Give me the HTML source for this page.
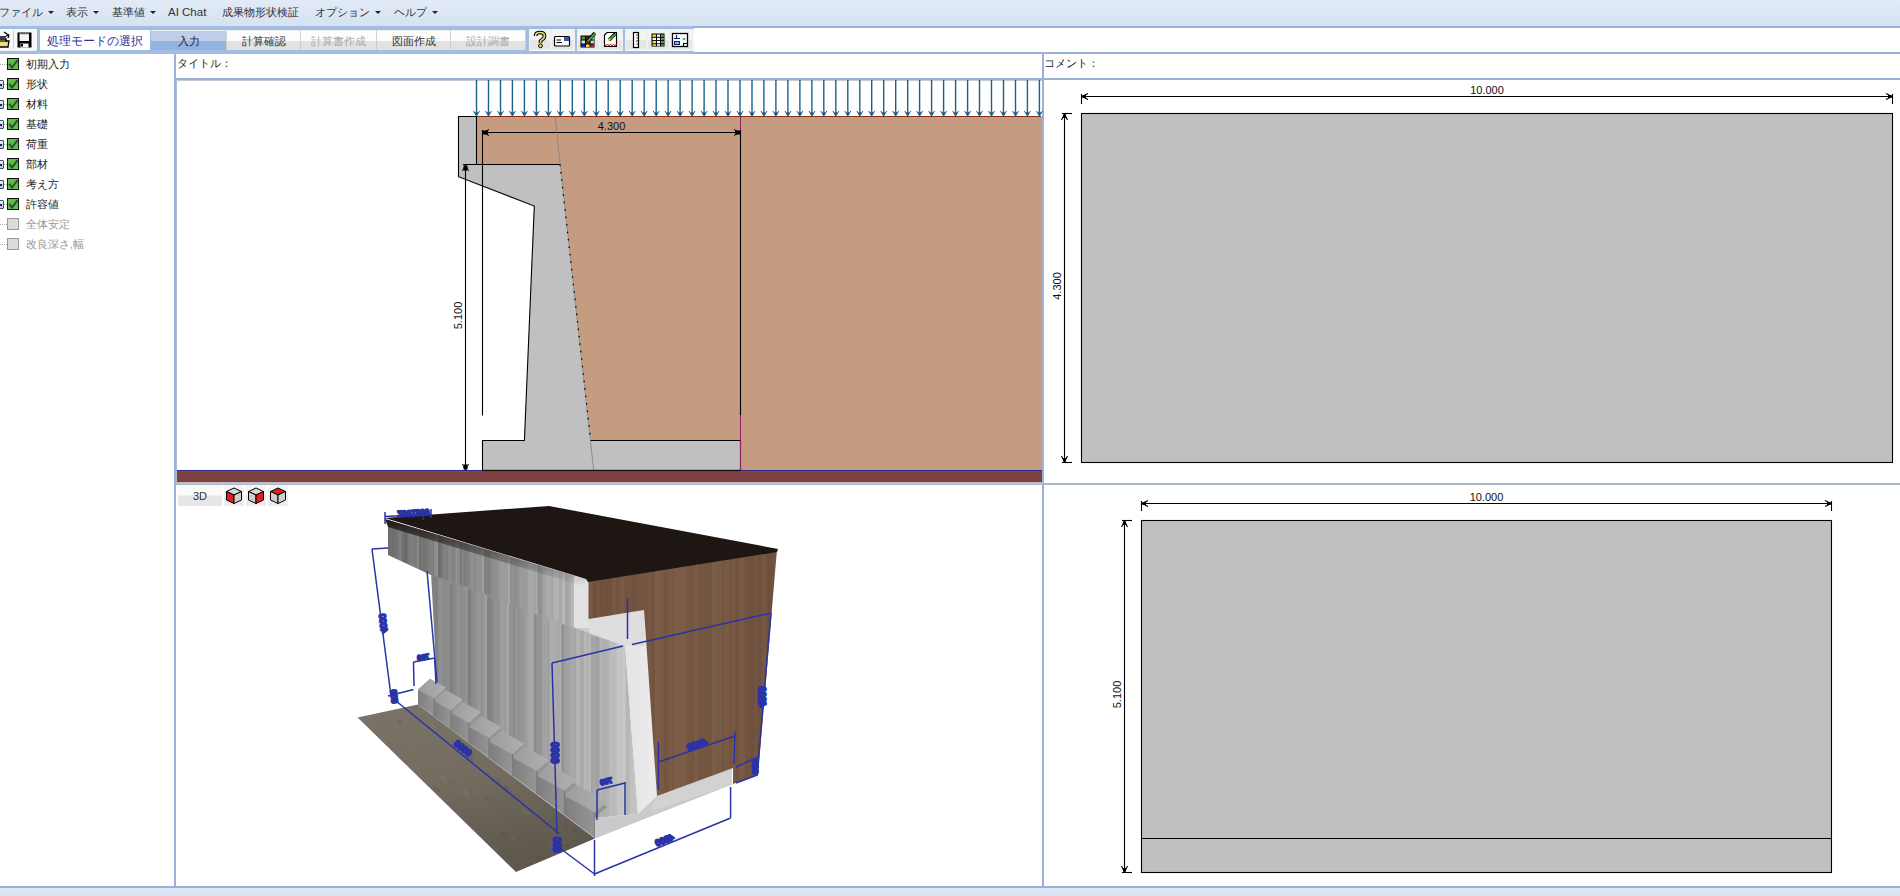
<!DOCTYPE html>
<html><head><meta charset="utf-8">
<style>
*{margin:0;padding:0;box-sizing:border-box}
html,body{width:1900px;height:896px;overflow:hidden;background:#fff;font-family:"Liberation Sans",sans-serif;font-size:12px;color:#222}
.a{position:absolute}
#menubar{left:0;top:0;width:1900px;height:26px;background:linear-gradient(#e2eaf6,#d6e2f2)}
.mi{position:absolute;top:5px;font-size:11px;color:#333;white-space:nowrap;line-height:14px}
.dd{display:inline-block;width:0;height:0;border-left:3px solid transparent;border-right:3px solid transparent;border-top:3px solid #222;vertical-align:middle;margin-left:5px;position:relative;top:-1px}
#tb{left:0;top:26px;width:694px;height:28px;background:#a3bce2}
#tbw{left:694px;top:26px;width:1206px;height:28px;background:#fff;border-top:2px solid #9bb1d7;border-bottom:2px solid #9bb1d7}
.tab{position:absolute;top:4px;height:20px;font-size:11px;text-align:center;line-height:21px;background:linear-gradient(#fdfdfd 0,#fdfdfd 55%,#e2e2e2 55%,#e2e2e2 100%);color:#333}
.tab.dis{color:#a8a8a8}
.tab{border-right:1px solid #cfcfcf;border-top:1px solid #f0f0f0}
.ib{position:absolute;top:4px;width:22px;height:20px;background:linear-gradient(#f6f6f6 0,#f6f6f6 50%,#e6e6e6 50%,#e6e6e6 100%)}
.ibg{position:absolute;top:3px;height:22px;background:#f4f6f8}
.tree{position:absolute;left:0;width:174px;height:20px}
.cb{position:absolute;left:7px;top:0;width:12px;height:12px;border:1px solid #111;background:#5cbf4c}
.cb.off{background:#dcdcdc;border-color:#999}
.exp{position:absolute;left:-5px;top:2px;width:9px;height:9px;border:1px solid #3a4a6a;border-radius:1px;background:linear-gradient(#e8f0fa,#b8c8e4)}
.exp:after{content:"";position:absolute;left:1px;top:3px;width:5px;height:1.5px;background:#223}
.dot{position:absolute;top:6px;height:1px;border-top:1px dotted #aaa}
.tl{position:absolute;left:26px;top:-1px;font-size:11px;line-height:14px;color:#222;white-space:nowrap}
.tl.off{color:#999}
</style></head><body>
<div id="menubar" class="a">
  <span class="mi" style="left:-1px">ファイル<i class="dd"></i></span>
  <span class="mi" style="left:66px">表示<i class="dd"></i></span>
  <span class="mi" style="left:112px">基準値<i class="dd"></i></span>
  <span class="mi" style="left:168px;font-size:11.5px">AI Chat</span>
  <span class="mi" style="left:222px">成果物形状検証</span>
  <span class="mi" style="left:315px">オプション<i class="dd"></i></span>
  <span class="mi" style="left:394px">ヘルプ<i class="dd"></i></span>
</div>
<div id="tb" class="a">
  <div class="ib" style="left:-11px;top:3px;width:24px;height:22px;background:#eef0f4"></div>
  <div class="ib" style="left:13px;top:3px;width:23px;height:22px;background:#eef0f4"></div>
  <div class="a" style="left:40px;top:4px;width:110px;height:20px;background:#fff;color:#33339c;font-size:12px;line-height:23px;padding-left:7px">処理モードの選択</div>
  <div class="tab" style="left:151px;width:76px;background:linear-gradient(#bfcde6 0,#bfcde6 55%,#93b4e0 55%,#93b4e0 100%);color:#223">入力</div>
  <div class="tab" style="left:227px;width:74px">計算確認</div>
  <div class="tab dis" style="left:301px;width:76px">計算書作成</div>
  <div class="tab" style="left:377px;width:74px">図面作成</div>
  <div class="tab dis" style="left:451px;width:75px">設計調書</div>
  <div class="ibg" style="left:529px;width:46px"></div>
  <div class="ibg" style="left:577px;width:46px"></div>
  <div class="ibg" style="left:625px;width:69px"></div>
</div>
<div id="tbw" class="a"></div>

<div class="tree" style="top:58px"><div class="dot" style="left:0px;width:7px"></div><div class="cb"><svg width="10" height="10" style="position:absolute;left:0;top:0"><path d="M1.3 4.8 L4 8.6 L9.6 1.2" stroke="#2a3a2a" stroke-width="2" fill="none" opacity="0.85"/></svg></div><div class="tl">初期入力</div></div>
<div class="tree" style="top:78px"><div class="exp"></div><div class="dot" style="left:4px;width:3px"></div><div class="cb"><svg width="10" height="10" style="position:absolute;left:0;top:0"><path d="M1.3 4.8 L4 8.6 L9.6 1.2" stroke="#2a3a2a" stroke-width="2" fill="none" opacity="0.85"/></svg></div><div class="tl">形状</div></div>
<div class="tree" style="top:98px"><div class="exp"></div><div class="dot" style="left:4px;width:3px"></div><div class="cb"><svg width="10" height="10" style="position:absolute;left:0;top:0"><path d="M1.3 4.8 L4 8.6 L9.6 1.2" stroke="#2a3a2a" stroke-width="2" fill="none" opacity="0.85"/></svg></div><div class="tl">材料</div></div>
<div class="tree" style="top:118px"><div class="exp"></div><div class="dot" style="left:4px;width:3px"></div><div class="cb"><svg width="10" height="10" style="position:absolute;left:0;top:0"><path d="M1.3 4.8 L4 8.6 L9.6 1.2" stroke="#2a3a2a" stroke-width="2" fill="none" opacity="0.85"/></svg></div><div class="tl">基礎</div></div>
<div class="tree" style="top:138px"><div class="exp"></div><div class="dot" style="left:4px;width:3px"></div><div class="cb"><svg width="10" height="10" style="position:absolute;left:0;top:0"><path d="M1.3 4.8 L4 8.6 L9.6 1.2" stroke="#2a3a2a" stroke-width="2" fill="none" opacity="0.85"/></svg></div><div class="tl">荷重</div></div>
<div class="tree" style="top:158px"><div class="exp"></div><div class="dot" style="left:4px;width:3px"></div><div class="cb"><svg width="10" height="10" style="position:absolute;left:0;top:0"><path d="M1.3 4.8 L4 8.6 L9.6 1.2" stroke="#2a3a2a" stroke-width="2" fill="none" opacity="0.85"/></svg></div><div class="tl">部材</div></div>
<div class="tree" style="top:178px"><div class="exp"></div><div class="dot" style="left:4px;width:3px"></div><div class="cb"><svg width="10" height="10" style="position:absolute;left:0;top:0"><path d="M1.3 4.8 L4 8.6 L9.6 1.2" stroke="#2a3a2a" stroke-width="2" fill="none" opacity="0.85"/></svg></div><div class="tl">考え方</div></div>
<div class="tree" style="top:198px"><div class="exp"></div><div class="dot" style="left:4px;width:3px"></div><div class="cb"><svg width="10" height="10" style="position:absolute;left:0;top:0"><path d="M1.3 4.8 L4 8.6 L9.6 1.2" stroke="#2a3a2a" stroke-width="2" fill="none" opacity="0.85"/></svg></div><div class="tl">許容値</div></div>
<div class="tree" style="top:218px"><div class="dot" style="left:0px;width:7px"></div><div class="cb off"></div><div class="tl off">全体安定</div></div>
<div class="tree" style="top:238px"><div class="dot" style="left:0px;width:7px"></div><div class="cb off"></div><div class="tl off">改良深さ,幅</div></div>
<!-- separators -->
<div class="a" style="left:174px;top:54px;width:2px;height:833px;background:#9bb1d7"></div>
<div class="a" style="left:176px;top:78px;width:1724px;height:2px;background:#9bb1d7"></div>
<div class="a" style="left:176px;top:80px;width:1px;height:403px;background:#b0bccf"></div>
<div class="a" style="left:176px;top:80px;width:866px;height:1px;background:#c4cad6"></div>
<div class="a" style="left:1042px;top:54px;width:2px;height:833px;background:#9bb1d7"></div>
<div class="a" style="left:176px;top:483px;width:1724px;height:2px;background:#a7b9c6"></div>
<div class="a" style="left:0;top:886px;width:1900px;height:2px;background:#9bb1d7"></div>
<div class="a" style="left:0;top:888px;width:1900px;height:8px;background:linear-gradient(#e0e8f4,#d8e3f1)"></div>

<div class="a" style="left:177px;top:56px;font-size:11px;line-height:14px">タイトル：</div>
<div class="a" style="left:1044px;top:56px;font-size:11px;line-height:14px">コメント：</div>

<svg class="a" style="left:0;top:0" width="1900" height="896">
<!-- 2D section -->
<polygon points="476.5,116.5 1042,116.5 1042,470.5 740.5,470.5 740.5,440.5 590.7,440.5 560,164.5 476.5,164.5" fill="#c69c80"/>
<line x1="476.5" y1="116.5" x2="1041" y2="116.5" stroke="#8a2a1a" stroke-width="1.2"/>
<polygon points="458.5,116.5 476.5,116.5 476.5,164.5 560,164.5 590.7,440.5 740.5,440.5 740.5,470.5 482.5,470.5 482.5,440.5 524.4,440.5 534.3,206 458.5,176.7" fill="#c0c0c0"/>
<g stroke="#000" stroke-width="1.1" fill="none">
<polyline points="476.5,116.5 458.5,116.5 458.5,176.7 534.3,206 524.4,440.5 482.5,440.5 482.5,470.5 740.5,470.5 740.5,440.5 590.7,440.5"/>
<line x1="476.5" y1="116.5" x2="476.5" y2="164.5"/>
<line x1="463" y1="164.5" x2="560" y2="164.5"/>
<line x1="482.5" y1="130" x2="482.5" y2="415.6"/>
<line x1="740.5" y1="130" x2="740.5" y2="415.6"/>
<line x1="465.5" y1="164.5" x2="465.5" y2="470"/>
<line x1="482.5" y1="132.5" x2="740.5" y2="132.5"/>
</g>
<line x1="740.5" y1="415.6" x2="740.5" y2="470" stroke="#9a1f6a" stroke-width="1.1"/><line x1="740.5" y1="117" x2="740.5" y2="130" stroke="#9a1f6a" stroke-width="1.1"/>
<line x1="555" y1="116.5" x2="593.7" y2="470.5" stroke="#808080" stroke-width="0.8"/>
<line x1="560" y1="164.5" x2="590.7" y2="440.5" stroke="#000" stroke-width="1.3" stroke-dasharray="1.5 6"/>
<!-- dim arrowheads -->
<g fill="#000" stroke="#000" stroke-width="1">
<path d="M483 132.5 L489 129.5 M483 132.5 L489 135.5" fill="none"/><rect x="483.5" y="131" width="4" height="3"/>
<path d="M740 132.5 L734 129.5 M740 132.5 L734 135.5" fill="none"/><rect x="735.5" y="131" width="4" height="3"/>
<path d="M465.5 165 L462.5 171 M465.5 165 L468.5 171" fill="none"/><rect x="464" y="166" width="3" height="4"/>
<path d="M465.5 470 L462.5 464 M465.5 470 L468.5 464" fill="none"/><rect x="464" y="465" width="3" height="4"/>
</g>
<text x="611.5" y="130" font-size="11" text-anchor="middle" font-family="Liberation Sans" fill="#111">4.300</text>
<text transform="translate(462,315.5) rotate(-90)" font-size="11" text-anchor="middle" font-family="Liberation Sans" fill="#111">5.100</text>
<!-- ICONS START -->
<g>
<!-- button frames -->
<rect x="0" y="29" width="37" height="21" fill="#f7f8fa"/>
<rect x="13" y="30" width="1" height="19" fill="#cfd2d8"/>
<!-- open folder -->
<path d="M-2 39 L6 39 L6 41 L9 41 L8 47 L-2 47 Z" fill="#e6e07a" stroke="#000" stroke-width="1.3"/>
<path d="M-2 41 L7 41" stroke="#000" stroke-width="1.2"/>
<path d="M-1 37 L6 37" stroke="#000" stroke-width="1.5"/>
<path d="M4 32 L7 34 L9 35 M9 35 L8 38 M9 35 L6 36" stroke="#000" stroke-width="1.3" fill="none"/>
<!-- save floppy -->
<rect x="17.5" y="32.5" width="14" height="15" fill="#000"/>
<rect x="19.5" y="33.5" width="9.5" height="7.5" fill="#f4f4f4"/>
<rect x="19.5" y="33" width="9.5" height="1.2" fill="#1d7d70"/>
<rect x="20.5" y="43.5" width="8" height="4" fill="#fafafa"/>
<rect x="21" y="44" width="2" height="2.5" fill="#000"/>
<!-- group backgrounds -->
<rect x="529" y="29" width="46" height="21" fill="#eef0f4"/>
<rect x="577" y="29" width="46" height="21" fill="#eef0f4"/>
<rect x="625" y="29" width="68" height="21" fill="#eef0f4"/>
<rect x="530" y="30" width="20" height="19" fill="#f3f3f3"/><rect x="530" y="40" width="20" height="9" fill="#e6e6e6"/>
<rect x="552" y="30" width="21" height="19" fill="#f3f3f3"/><rect x="552" y="40" width="21" height="9" fill="#e6e6e6"/>
<rect x="578" y="30" width="21" height="19" fill="#f3f3f3"/><rect x="578" y="40" width="21" height="9" fill="#e6e6e6"/>
<rect x="601" y="30" width="21" height="19" fill="#f3f3f3"/><rect x="601" y="40" width="21" height="9" fill="#e6e6e6"/>
<rect x="626" y="30" width="20" height="19" fill="#f3f3f3"/><rect x="626" y="40" width="20" height="9" fill="#e6e6e6"/>
<rect x="648" y="30" width="21" height="19" fill="#f3f3f3"/><rect x="648" y="40" width="21" height="9" fill="#e6e6e6"/>
<rect x="671" y="30" width="21" height="19" fill="#f3f3f3"/><rect x="671" y="40" width="21" height="9" fill="#e6e6e6"/>
<!-- help ? -->
<path d="M535.5 36 Q535.5 32.5 540 32.5 Q544.5 32.5 544.5 36 Q544.5 38.5 541.5 40 L540.5 41 L540.5 43" stroke="#000" stroke-width="3.6" fill="none"/>
<path d="M535.5 36 Q535.5 32.5 540 32.5 Q544.5 32.5 544.5 36 Q544.5 38.5 541.5 40 L540.5 41 L540.5 43" stroke="#e8e070" stroke-width="1.6" fill="none"/>
<circle cx="540.5" cy="45.8" r="1.9" fill="#e8e070" stroke="#000" stroke-width="1"/>
<!-- card -->
<rect x="554.5" y="36.5" width="15" height="9.5" rx="1" fill="#fff" stroke="#000" stroke-width="1.2"/>
<rect x="564" y="37" width="5" height="4" fill="#3a5ab0"/>
<path d="M556.5 40 L561 40 M556.5 42.5 L562 42.5" stroke="#000" stroke-width="1"/>
<!-- grid pencil -->
<rect x="580.5" y="35.5" width="14" height="12" fill="#000"/>
<rect x="581.5" y="36.5" width="3.5" height="3" fill="#3aa03a"/><rect x="586" y="36.5" width="3.5" height="3" fill="#6a1a1a"/><rect x="590.5" y="36.5" width="3.5" height="3" fill="#ccc"/>
<rect x="581.5" y="40.5" width="3.5" height="3" fill="#ddd"/><rect x="586" y="40.5" width="3.5" height="3" fill="#b03030"/><rect x="590.5" y="40.5" width="3.5" height="3" fill="#a8d8d8"/>
<rect x="581.5" y="44.5" width="3.5" height="2.5" fill="#1a2aa0"/><rect x="586" y="44.5" width="3.5" height="2.5" fill="#e8e050"/><rect x="590.5" y="44.5" width="3.5" height="2.5" fill="#c02020"/>
<path d="M587 42 L595 33" stroke="#000" stroke-width="3.5"/><path d="M587.5 41.5 L595 33.5" stroke="#3aa83a" stroke-width="2"/>
<!-- doc pencil -->
<path d="M604.5 35 L607 32.5 L616.5 32.5 L616.5 46.5 L604.5 46.5 Z" fill="#fff" stroke="#000" stroke-width="1.1"/>
<path d="M604.5 44 L606 46 L607.5 44 L609 46 L610.5 44 L612 46 L613.5 44 L615 46 L616.5 44" stroke="#d02020" stroke-width="1" fill="none"/>
<path d="M609 40 L616 33" stroke="#000" stroke-width="3.2"/><path d="M609.5 39.5 L616 33.5" stroke="#3aa83a" stroke-width="1.8"/>
<path d="M608 41 L610 38.5" stroke="#e8e050" stroke-width="1.5"/>
<!-- ruler -->
<rect x="633.5" y="32.5" width="5" height="15" fill="#fff" stroke="#000" stroke-width="1.2"/>
<path d="M636 35 L638 35 M636.5 38 L638 38 M636 41 L638 41 M636.5 44 L638 44" stroke="#000" stroke-width="0.8"/>
<!-- table -->
<rect x="651.5" y="33.5" width="13" height="13" fill="#000"/>
<rect x="652.5" y="34.5" width="3.5" height="2.3" fill="#e8e040"/><rect x="657" y="34.5" width="3" height="2.3" fill="#fff"/><rect x="661" y="34.5" width="2.8" height="2.3" fill="#4ab04a"/>
<rect x="652.5" y="37.8" width="3.5" height="2.3" fill="#fff"/><rect x="657" y="37.8" width="3" height="2.3" fill="#fff"/><rect x="661" y="37.8" width="2.8" height="2.3" fill="#4ab04a"/>
<rect x="652.5" y="41" width="3.5" height="2.3" fill="#e8e040"/><rect x="657" y="41" width="3" height="2.3" fill="#fff"/><rect x="661" y="41" width="2.8" height="2.3" fill="#4ab04a"/>
<rect x="652.5" y="44.2" width="3.5" height="1.6" fill="#e8e040"/><rect x="657" y="44.2" width="3" height="1.6" fill="#fff"/><rect x="661" y="44.2" width="2.8" height="1.6" fill="#4ab04a"/>
<!-- layout -->
<rect x="672.5" y="33.5" width="15" height="13" fill="#fff" stroke="#000" stroke-width="1.3"/>
<path d="M676.5 35 L676.5 39 M674 38.5 L680 38.5" stroke="#1a1a6a" stroke-width="1.1"/>
<rect x="674.5" y="41.5" width="5" height="3" fill="#5ac8f0" stroke="#1a1a6a" stroke-width="1"/>
<ellipse cx="684" cy="39" rx="1.5" ry="1" fill="#4ab04a"/>
<path d="M683.5 46.5 L683.5 43.5 L687.5 43.5" stroke="#000" stroke-width="1.1" fill="none"/>
</g>
<!-- ICONS END -->
<!-- 3DTB START -->
<rect x="178" y="485.5" width="44" height="20.5" rx="1" fill="#e6e6e6"/>
<rect x="178" y="485.5" width="44" height="10" fill="#fafafa"/>
<text x="200" y="500" font-size="11" text-anchor="middle" font-family="Liberation Sans" fill="#333">3D</text>
<rect x="224" y="485.5" width="20" height="20.5" rx="1" fill="#ececec"/><rect x="224" y="485.5" width="20" height="10" rx="1" fill="#f5f5f5"/><path d="M226.5 491.5 L234 488 L241.5 491.5 L234 495 Z" fill="#d8d8d8" stroke="#000" stroke-width="1"/><path d="M226.5 491.5 L234 495 L234 503.5 L226.5 500 Z" fill="#e02020" stroke="#000" stroke-width="1"/><path d="M241.5 491.5 L234 495 L234 503.5 L241.5 500 Z" fill="#cfcfcf" stroke="#000" stroke-width="1"/><rect x="246" y="485.5" width="20" height="20.5" rx="1" fill="#ececec"/><rect x="246" y="485.5" width="20" height="10" rx="1" fill="#f5f5f5"/><path d="M248.5 491.5 L256 488 L263.5 491.5 L256 495 Z" fill="#d8d8d8" stroke="#000" stroke-width="1"/><path d="M248.5 491.5 L256 495 L256 503.5 L248.5 500 Z" fill="#cfcfcf" stroke="#000" stroke-width="1"/><path d="M263.5 491.5 L256 495 L256 503.5 L263.5 500 Z" fill="#e02020" stroke="#000" stroke-width="1"/><rect x="268" y="485.5" width="20" height="20.5" rx="1" fill="#ececec"/><rect x="268" y="485.5" width="20" height="10" rx="1" fill="#f5f5f5"/><path d="M270.5 491.5 L278 488 L285.5 491.5 L278 495 Z" fill="#e02020" stroke="#000" stroke-width="1"/><path d="M270.5 491.5 L278 495 L278 503.5 L270.5 500 Z" fill="#cfcfcf" stroke="#000" stroke-width="1"/><path d="M285.5 491.5 L278 495 L278 503.5 L285.5 500 Z" fill="#cfcfcf" stroke="#000" stroke-width="1"/>
<!-- 3DTB END -->
<!-- right panels -->
<rect x="1081.5" y="113.5" width="811" height="349" fill="#c0c0c0" stroke="#000" stroke-width="1.1"/>
<g stroke="#000" stroke-width="1.1" fill="none">
<line x1="1081.5" y1="96.5" x2="1892.5" y2="96.5"/>
<line x1="1081.5" y1="94.0" x2="1081.5" y2="104.0"/>
<line x1="1892.5" y1="94.0" x2="1892.5" y2="104.0"/>
<path d="M1082.0 96.5 L1088.0 93.5 M1082.0 96.5 L1088.0 99.5 M1892.0 96.5 L1886.0 93.5 M1892.0 96.5 L1886.0 99.5"/>
</g><g fill="#000"><rect x="1082.5" y="95.0" width="3.5" height="3"/><rect x="1888.0" y="95.0" width="3.5" height="3"/></g>
<text x="1487.0" y="94" font-size="11" text-anchor="middle" font-family="Liberation Sans" fill="#111">10.000</text><g stroke="#000" stroke-width="1.1" fill="none">
<line x1="1064.5" y1="113.5" x2="1064.5" y2="462.5"/>
<line x1="1062.0" y1="113.5" x2="1072.0" y2="113.5"/>
<line x1="1062.0" y1="462.5" x2="1072.0" y2="462.5"/>
<path d="M1064.5 114.0 L1061.5 120.0 M1064.5 114.0 L1067.5 120.0 M1064.5 462.0 L1061.5 456.0 M1064.5 462.0 L1067.5 456.0"/>
</g><g fill="#000"><rect x="1063.0" y="114.5" width="3" height="3.5"/><rect x="1063.0" y="458.0" width="3" height="3.5"/></g>
<text transform="translate(1061,286.0) rotate(-90)" font-size="11" text-anchor="middle" font-family="Liberation Sans" fill="#111">4.300</text>
<rect x="1141.5" y="520.5" width="690" height="352" fill="#c0c0c0" stroke="#000" stroke-width="1.1"/>
<line x1="1141.5" y1="838.5" x2="1831.5" y2="838.5" stroke="#000" stroke-width="1.1"/>
<g stroke="#000" stroke-width="1.1" fill="none">
<line x1="1141.5" y1="503.5" x2="1831.5" y2="503.5"/>
<line x1="1141.5" y1="501.0" x2="1141.5" y2="511.0"/>
<line x1="1831.5" y1="501.0" x2="1831.5" y2="511.0"/>
<path d="M1142.0 503.5 L1148.0 500.5 M1142.0 503.5 L1148.0 506.5 M1831.0 503.5 L1825.0 500.5 M1831.0 503.5 L1825.0 506.5"/>
</g><g fill="#000"><rect x="1142.5" y="502.0" width="3.5" height="3"/><rect x="1827.0" y="502.0" width="3.5" height="3"/></g>
<text x="1486.5" y="501" font-size="11" text-anchor="middle" font-family="Liberation Sans" fill="#111">10.000</text><g stroke="#000" stroke-width="1.1" fill="none">
<line x1="1124.5" y1="520.5" x2="1124.5" y2="872.5"/>
<line x1="1122.0" y1="520.5" x2="1132.0" y2="520.5"/>
<line x1="1122.0" y1="872.5" x2="1132.0" y2="872.5"/>
<path d="M1124.5 521.0 L1121.5 527.0 M1124.5 521.0 L1127.5 527.0 M1124.5 872.0 L1121.5 866.0 M1124.5 872.0 L1127.5 866.0"/>
</g><g fill="#000"><rect x="1123.0" y="521.5" width="3" height="3.5"/><rect x="1123.0" y="868.0" width="3" height="3.5"/></g>
<text transform="translate(1121,694.5) rotate(-90)" font-size="11" text-anchor="middle" font-family="Liberation Sans" fill="#111">5.100</text>
<!-- 3D START --><defs>
<linearGradient id="g_ground" x1="0" y1="0" x2="0.25" y2="1"><stop offset="0" stop-color="#7a7367"/><stop offset="0.5" stop-color="#746c60"/><stop offset="1" stop-color="#5f584e"/></linearGradient>
<linearGradient id="g_upper" x1="0" y1="0" x2="1" y2="0"><stop offset="0" stop-color="#6c6c6c"/><stop offset="0.5" stop-color="#8c8c8c"/><stop offset="1" stop-color="#b2b2b2"/></linearGradient>
<linearGradient id="g_stem" x1="0" y1="0" x2="1" y2="0"><stop offset="0" stop-color="#828282"/><stop offset="0.45" stop-color="#9c9c9c"/><stop offset="0.8" stop-color="#b4b4b4"/><stop offset="1" stop-color="#c4c4c4"/></linearGradient>
<linearGradient id="g_wood" x1="0" y1="0" x2="1" y2="0"><stop offset="0" stop-color="#735440"/><stop offset="0.5" stop-color="#7b5c47"/><stop offset="1" stop-color="#715340"/></linearGradient>
<linearGradient id="g_strip" x1="0" y1="0" x2="1" y2="0"><stop offset="0" stop-color="#d0d0d0"/><stop offset="1" stop-color="#e6e6e6"/></linearGradient>
<clipPath id="c_upper"><polygon points="388,520 575,576 575,628 508,604 466,586 431,575 388,555"/></clipPath>
<clipPath id="c_stem"><polygon points="431,572 466,583 508,601 575,625 625,643 638,814 595,818 437,684"/></clipPath>
<clipPath id="c_wood"><polygon points="588.5,580 777,549 758,775 733,784 733,768 657,796 644,610 588.5,619"/></clipPath>
<clipPath id="c_ground"><polygon points="357.6,717.5 418,704.5 595,838.6 516,872"/></clipPath>
</defs>
<polygon points="357.6,717.5 418.0,704.5 595.0,838.6 516.0,872.0" fill="url(#g_ground)" />
<g clip-path="url(#c_ground)"><ellipse cx="436.1" cy="725.9" rx="4.6" ry="0.9" fill="#4e473e" opacity="0.15" transform="rotate(38 436.1 725.9)"/><ellipse cx="373.6" cy="787.3" rx="2.1" ry="1.3" fill="#4e473e" opacity="0.14" transform="rotate(38 373.6 787.3)"/><ellipse cx="489.5" cy="710.2" rx="4.3" ry="1.9" fill="#4e473e" opacity="0.19" transform="rotate(38 489.5 710.2)"/><ellipse cx="453.2" cy="867.9" rx="2.2" ry="1.8" fill="#8a8274" opacity="0.16" transform="rotate(38 453.2 867.9)"/><ellipse cx="487.1" cy="798.2" rx="4.2" ry="1.6" fill="#4e473e" opacity="0.19" transform="rotate(38 487.1 798.2)"/><ellipse cx="510.1" cy="764.1" rx="4.2" ry="0.9" fill="#4e473e" opacity="0.19" transform="rotate(38 510.1 764.1)"/><ellipse cx="476.7" cy="791.5" rx="5.1" ry="1.4" fill="#8a8274" opacity="0.15" transform="rotate(38 476.7 791.5)"/><ellipse cx="418.4" cy="730.9" rx="5.1" ry="0.9" fill="#8a8274" opacity="0.18" transform="rotate(38 418.4 730.9)"/><ellipse cx="565.7" cy="825.5" rx="3.2" ry="2.0" fill="#4e473e" opacity="0.18" transform="rotate(38 565.7 825.5)"/><ellipse cx="398.8" cy="758.8" rx="5.7" ry="1.3" fill="#4e473e" opacity="0.21" transform="rotate(38 398.8 758.8)"/><ellipse cx="494.7" cy="850.6" rx="3.3" ry="1.6" fill="#8a8274" opacity="0.19" transform="rotate(38 494.7 850.6)"/><ellipse cx="467.2" cy="844.5" rx="5.8" ry="1.4" fill="#4e473e" opacity="0.11" transform="rotate(38 467.2 844.5)"/><ellipse cx="524.9" cy="811.3" rx="6.0" ry="1.8" fill="#8a8274" opacity="0.21" transform="rotate(38 524.9 811.3)"/><ellipse cx="568.5" cy="759.7" rx="5.8" ry="1.2" fill="#4e473e" opacity="0.17" transform="rotate(38 568.5 759.7)"/><ellipse cx="411.3" cy="749.4" rx="5.0" ry="1.3" fill="#8a8274" opacity="0.11" transform="rotate(38 411.3 749.4)"/><ellipse cx="465.6" cy="794.5" rx="5.5" ry="1.8" fill="#8a8274" opacity="0.21" transform="rotate(38 465.6 794.5)"/><ellipse cx="591.8" cy="817.4" rx="3.5" ry="1.1" fill="#4e473e" opacity="0.13" transform="rotate(38 591.8 817.4)"/><ellipse cx="414.5" cy="740.1" rx="3.9" ry="1.5" fill="#8a8274" opacity="0.14" transform="rotate(38 414.5 740.1)"/><ellipse cx="394.2" cy="791.9" rx="4.4" ry="1.2" fill="#4e473e" opacity="0.20" transform="rotate(38 394.2 791.9)"/><ellipse cx="481.1" cy="806.2" rx="4.7" ry="0.9" fill="#8a8274" opacity="0.16" transform="rotate(38 481.1 806.2)"/><ellipse cx="452.6" cy="782.8" rx="3.6" ry="1.0" fill="#4e473e" opacity="0.17" transform="rotate(38 452.6 782.8)"/><ellipse cx="385.8" cy="803.3" rx="2.4" ry="1.5" fill="#4e473e" opacity="0.24" transform="rotate(38 385.8 803.3)"/><ellipse cx="504.2" cy="712.1" rx="2.8" ry="1.3" fill="#8a8274" opacity="0.24" transform="rotate(38 504.2 712.1)"/><ellipse cx="501.5" cy="781.6" rx="2.5" ry="1.4" fill="#8a8274" opacity="0.17" transform="rotate(38 501.5 781.6)"/><ellipse cx="433.3" cy="724.8" rx="5.0" ry="1.7" fill="#8a8274" opacity="0.22" transform="rotate(38 433.3 724.8)"/><ellipse cx="397.9" cy="704.0" rx="5.8" ry="1.4" fill="#4e473e" opacity="0.20" transform="rotate(38 397.9 704.0)"/><ellipse cx="574.8" cy="830.4" rx="3.2" ry="1.6" fill="#4e473e" opacity="0.20" transform="rotate(38 574.8 830.4)"/><ellipse cx="421.4" cy="763.1" rx="2.7" ry="1.7" fill="#8a8274" opacity="0.20" transform="rotate(38 421.4 763.1)"/><ellipse cx="504.1" cy="835.6" rx="5.0" ry="1.0" fill="#4e473e" opacity="0.22" transform="rotate(38 504.1 835.6)"/><ellipse cx="533.9" cy="739.0" rx="4.1" ry="1.2" fill="#4e473e" opacity="0.25" transform="rotate(38 533.9 739.0)"/><ellipse cx="545.7" cy="781.2" rx="2.8" ry="1.5" fill="#8a8274" opacity="0.17" transform="rotate(38 545.7 781.2)"/><ellipse cx="580.2" cy="869.9" rx="5.8" ry="1.2" fill="#4e473e" opacity="0.12" transform="rotate(38 580.2 869.9)"/><ellipse cx="470.5" cy="758.1" rx="3.9" ry="2.0" fill="#4e473e" opacity="0.17" transform="rotate(38 470.5 758.1)"/><ellipse cx="513.4" cy="837.5" rx="2.3" ry="1.6" fill="#8a8274" opacity="0.22" transform="rotate(38 513.4 837.5)"/><ellipse cx="536.3" cy="782.2" rx="2.7" ry="1.7" fill="#8a8274" opacity="0.11" transform="rotate(38 536.3 782.2)"/><ellipse cx="582.3" cy="824.2" rx="3.9" ry="1.7" fill="#4e473e" opacity="0.21" transform="rotate(38 582.3 824.2)"/><ellipse cx="400.0" cy="721.9" rx="2.6" ry="1.9" fill="#4e473e" opacity="0.19" transform="rotate(38 400.0 721.9)"/><ellipse cx="500.0" cy="781.6" rx="5.7" ry="1.0" fill="#4e473e" opacity="0.10" transform="rotate(38 500.0 781.6)"/><ellipse cx="547.8" cy="824.9" rx="2.4" ry="1.7" fill="#4e473e" opacity="0.17" transform="rotate(38 547.8 824.9)"/><ellipse cx="564.9" cy="842.1" rx="2.8" ry="1.1" fill="#8a8274" opacity="0.18" transform="rotate(38 564.9 842.1)"/><ellipse cx="539.5" cy="756.1" rx="4.2" ry="1.8" fill="#4e473e" opacity="0.24" transform="rotate(38 539.5 756.1)"/><ellipse cx="443.1" cy="778.8" rx="4.3" ry="1.9" fill="#8a8274" opacity="0.22" transform="rotate(38 443.1 778.8)"/><ellipse cx="566.4" cy="722.5" rx="2.6" ry="1.4" fill="#8a8274" opacity="0.22" transform="rotate(38 566.4 722.5)"/><ellipse cx="503.0" cy="833.5" rx="2.6" ry="1.0" fill="#4e473e" opacity="0.18" transform="rotate(38 503.0 833.5)"/><ellipse cx="436.6" cy="789.2" rx="4.2" ry="1.7" fill="#4e473e" opacity="0.23" transform="rotate(38 436.6 789.2)"/><ellipse cx="373.4" cy="732.9" rx="2.2" ry="0.9" fill="#8a8274" opacity="0.18" transform="rotate(38 373.4 732.9)"/><ellipse cx="538.6" cy="856.9" rx="3.8" ry="1.5" fill="#4e473e" opacity="0.20" transform="rotate(38 538.6 856.9)"/><ellipse cx="466.3" cy="791.7" rx="3.9" ry="1.9" fill="#8a8274" opacity="0.24" transform="rotate(38 466.3 791.7)"/><ellipse cx="569.8" cy="734.8" rx="3.8" ry="1.3" fill="#8a8274" opacity="0.17" transform="rotate(38 569.8 734.8)"/><ellipse cx="377.0" cy="741.4" rx="2.3" ry="1.6" fill="#4e473e" opacity="0.23" transform="rotate(38 377.0 741.4)"/><ellipse cx="396.3" cy="823.2" rx="4.6" ry="1.0" fill="#4e473e" opacity="0.25" transform="rotate(38 396.3 823.2)"/><ellipse cx="411.6" cy="863.8" rx="3.6" ry="1.4" fill="#4e473e" opacity="0.12" transform="rotate(38 411.6 863.8)"/><ellipse cx="461.4" cy="788.7" rx="3.4" ry="1.0" fill="#8a8274" opacity="0.11" transform="rotate(38 461.4 788.7)"/><ellipse cx="446.0" cy="758.1" rx="3.8" ry="1.6" fill="#8a8274" opacity="0.15" transform="rotate(38 446.0 758.1)"/><ellipse cx="506.6" cy="788.1" rx="2.3" ry="2.0" fill="#4e473e" opacity="0.25" transform="rotate(38 506.6 788.1)"/><ellipse cx="384.6" cy="745.7" rx="2.2" ry="1.7" fill="#8a8274" opacity="0.21" transform="rotate(38 384.6 745.7)"/><ellipse cx="552.6" cy="846.1" rx="4.7" ry="1.9" fill="#8a8274" opacity="0.12" transform="rotate(38 552.6 846.1)"/><ellipse cx="576.0" cy="798.1" rx="4.8" ry="0.9" fill="#4e473e" opacity="0.22" transform="rotate(38 576.0 798.1)"/><ellipse cx="403.1" cy="854.0" rx="3.1" ry="0.8" fill="#4e473e" opacity="0.22" transform="rotate(38 403.1 854.0)"/><ellipse cx="379.7" cy="847.3" rx="2.3" ry="1.8" fill="#8a8274" opacity="0.10" transform="rotate(38 379.7 847.3)"/></g>
<linearGradient id="g_col" x1="0" y1="0" x2="1" y2="0"><stop offset="0" stop-color="#000" stop-opacity="0.10"/><stop offset="0.7" stop-color="#fff" stop-opacity="0.06"/><stop offset="1" stop-color="#fff" stop-opacity="0.12"/></linearGradient>
<polygon points="431.0,572.0 466.0,583.0 508.0,601.0 575.0,625.0 625.0,643.0 638.0,814.0 595.0,818.0 437.0,684.0" fill="url(#g_stem)" />
<g clip-path="url(#c_stem)"><polygon points="431.0,576.5 449.0,579.6 449.0,845.0 431.0,845.0" fill="url(#g_col)" /><polygon points="449.0,583.1 468.0,586.6 468.0,845.0 449.0,845.0" fill="url(#g_col)" /><polygon points="468.0,590.1 487.0,593.6 487.0,845.0 468.0,845.0" fill="url(#g_col)" /><polygon points="487.0,597.1 509.0,601.7 509.0,845.0 487.0,845.0" fill="url(#g_col)" /><polygon points="509.0,605.2 534.0,610.9 534.0,845.0 509.0,845.0" fill="url(#g_col)" /><polygon points="534.0,614.4 561.0,620.8 561.0,845.0 534.0,845.0" fill="url(#g_col)" /><polygon points="561.0,624.3 591.0,631.9 591.0,845.0 561.0,845.0" fill="url(#g_col)" /><polygon points="591.0,635.4 625.0,644.4 625.0,845.0 591.0,845.0" fill="url(#g_col)" /><rect x="431.0" y="560" width="4.0" height="290" fill="#fff" opacity="0.03"/><rect x="435.0" y="560" width="3.1" height="290" fill="#000" opacity="0.01"/><rect x="438.0" y="560" width="3.8" height="290" fill="#fff" opacity="0.06"/><rect x="441.9" y="560" width="1.6" height="290" fill="#fff" opacity="0.02"/><rect x="443.5" y="560" width="3.1" height="290" fill="#000" opacity="0.04"/><rect x="446.6" y="560" width="2.2" height="290" fill="#000" opacity="0.04"/><rect x="448.8" y="560" width="2.2" height="290" fill="#fff" opacity="0.05"/><rect x="451.0" y="560" width="1.6" height="290" fill="#000" opacity="0.01"/><rect x="452.6" y="560" width="2.8" height="290" fill="#fff" opacity="0.02"/><rect x="455.4" y="560" width="1.8" height="290" fill="#fff" opacity="0.05"/><rect x="457.1" y="560" width="3.1" height="290" fill="#fff" opacity="0.04"/><rect x="460.3" y="560" width="3.9" height="290" fill="#000" opacity="0.03"/><rect x="464.2" y="560" width="4.0" height="290" fill="#000" opacity="0.03"/><rect x="468.2" y="560" width="2.5" height="290" fill="#000" opacity="0.03"/><rect x="470.7" y="560" width="3.6" height="290" fill="#fff" opacity="0.01"/><rect x="474.3" y="560" width="2.6" height="290" fill="#fff" opacity="0.01"/><rect x="476.8" y="560" width="3.7" height="290" fill="#fff" opacity="0.04"/><rect x="480.5" y="560" width="3.0" height="290" fill="#000" opacity="0.04"/><rect x="483.5" y="560" width="2.6" height="290" fill="#fff" opacity="0.02"/><rect x="486.2" y="560" width="1.5" height="290" fill="#fff" opacity="0.03"/><rect x="487.7" y="560" width="3.9" height="290" fill="#000" opacity="0.04"/><rect x="491.6" y="560" width="1.6" height="290" fill="#000" opacity="0.05"/><rect x="493.2" y="560" width="2.4" height="290" fill="#fff" opacity="0.01"/><rect x="495.6" y="560" width="1.7" height="290" fill="#000" opacity="0.02"/><rect x="497.3" y="560" width="2.1" height="290" fill="#000" opacity="0.05"/><rect x="499.4" y="560" width="2.2" height="290" fill="#fff" opacity="0.01"/><rect x="501.6" y="560" width="3.0" height="290" fill="#fff" opacity="0.03"/><rect x="504.5" y="560" width="2.3" height="290" fill="#000" opacity="0.02"/><rect x="506.8" y="560" width="3.1" height="290" fill="#fff" opacity="0.05"/><rect x="509.9" y="560" width="3.4" height="290" fill="#fff" opacity="0.05"/><rect x="513.3" y="560" width="1.9" height="290" fill="#000" opacity="0.05"/><rect x="515.2" y="560" width="1.6" height="290" fill="#fff" opacity="0.05"/><rect x="516.8" y="560" width="3.3" height="290" fill="#000" opacity="0.05"/><rect x="520.2" y="560" width="3.8" height="290" fill="#000" opacity="0.05"/><rect x="523.9" y="560" width="3.6" height="290" fill="#000" opacity="0.04"/><rect x="527.5" y="560" width="1.7" height="290" fill="#fff" opacity="0.01"/><rect x="529.2" y="560" width="3.9" height="290" fill="#fff" opacity="0.03"/><rect x="533.1" y="560" width="2.9" height="290" fill="#000" opacity="0.04"/><rect x="536.0" y="560" width="2.7" height="290" fill="#000" opacity="0.01"/><rect x="538.7" y="560" width="3.4" height="290" fill="#000" opacity="0.04"/><rect x="542.1" y="560" width="3.1" height="290" fill="#fff" opacity="0.01"/><rect x="545.3" y="560" width="2.1" height="290" fill="#fff" opacity="0.01"/><rect x="547.4" y="560" width="2.1" height="290" fill="#000" opacity="0.05"/><rect x="549.5" y="560" width="3.3" height="290" fill="#fff" opacity="0.06"/><rect x="552.8" y="560" width="3.6" height="290" fill="#fff" opacity="0.01"/><rect x="556.4" y="560" width="3.4" height="290" fill="#000" opacity="0.04"/><rect x="559.9" y="560" width="1.7" height="290" fill="#fff" opacity="0.02"/><rect x="561.5" y="560" width="3.1" height="290" fill="#000" opacity="0.04"/><rect x="564.7" y="560" width="1.5" height="290" fill="#fff" opacity="0.01"/><rect x="566.2" y="560" width="3.9" height="290" fill="#000" opacity="0.01"/><rect x="570.1" y="560" width="3.2" height="290" fill="#fff" opacity="0.02"/><rect x="573.3" y="560" width="2.7" height="290" fill="#000" opacity="0.03"/><rect x="576.0" y="560" width="4.0" height="290" fill="#fff" opacity="0.04"/><rect x="580.0" y="560" width="3.9" height="290" fill="#000" opacity="0.06"/><rect x="583.9" y="560" width="2.2" height="290" fill="#fff" opacity="0.01"/><rect x="586.1" y="560" width="4.0" height="290" fill="#000" opacity="0.03"/><rect x="590.1" y="560" width="1.7" height="290" fill="#fff" opacity="0.01"/><rect x="591.8" y="560" width="3.9" height="290" fill="#fff" opacity="0.02"/><rect x="595.7" y="560" width="3.7" height="290" fill="#000" opacity="0.05"/><rect x="599.4" y="560" width="2.7" height="290" fill="#fff" opacity="0.05"/><rect x="602.2" y="560" width="1.6" height="290" fill="#fff" opacity="0.01"/><rect x="603.7" y="560" width="3.2" height="290" fill="#000" opacity="0.03"/><rect x="606.9" y="560" width="2.5" height="290" fill="#000" opacity="0.03"/><rect x="609.5" y="560" width="3.6" height="290" fill="#fff" opacity="0.01"/><rect x="613.1" y="560" width="3.6" height="290" fill="#000" opacity="0.02"/><rect x="616.7" y="560" width="3.3" height="290" fill="#fff" opacity="0.06"/><rect x="619.9" y="560" width="2.1" height="290" fill="#fff" opacity="0.01"/><rect x="622.1" y="560" width="4.0" height="290" fill="#fff" opacity="0.04"/><rect x="626.1" y="560" width="3.8" height="290" fill="#000" opacity="0.05"/><rect x="629.9" y="560" width="2.2" height="290" fill="#fff" opacity="0.01"/></g>
<polygon points="388.0,520.0 575.0,576.0 575.0,628.0 508.0,604.0 466.0,586.0 431.0,575.0 388.0,555.0" fill="url(#g_upper)" />
<g clip-path="url(#c_upper)"><polygon points="386.0,500.0 402.0,500.0 402.0,660.0 386.0,660.0" fill="url(#g_col)" /><polygon points="402.0,500.0 419.0,500.0 419.0,660.0 402.0,660.0" fill="url(#g_col)" /><polygon points="419.0,500.0 438.0,500.0 438.0,660.0 419.0,660.0" fill="url(#g_col)" /><polygon points="438.0,500.0 460.0,500.0 460.0,660.0 438.0,660.0" fill="url(#g_col)" /><polygon points="460.0,500.0 484.0,500.0 484.0,660.0 460.0,660.0" fill="url(#g_col)" /><polygon points="484.0,500.0 510.0,500.0 510.0,660.0 484.0,660.0" fill="url(#g_col)" /><polygon points="510.0,500.0 537.0,500.0 537.0,660.0 510.0,660.0" fill="url(#g_col)" /><polygon points="537.0,500.0 565.0,500.0 565.0,660.0 537.0,660.0" fill="url(#g_col)" /><polygon points="565.0,500.0 576.0,500.0 576.0,660.0 565.0,660.0" fill="url(#g_col)" /><rect x="386.0" y="500" width="3.1" height="160" fill="#fff" opacity="0.02"/><rect x="389.1" y="500" width="2.6" height="160" fill="#fff" opacity="0.03"/><rect x="391.7" y="500" width="3.5" height="160" fill="#000" opacity="0.03"/><rect x="395.1" y="500" width="3.5" height="160" fill="#000" opacity="0.04"/><rect x="398.7" y="500" width="3.3" height="160" fill="#fff" opacity="0.01"/><rect x="402.0" y="500" width="2.6" height="160" fill="#fff" opacity="0.05"/><rect x="404.6" y="500" width="2.7" height="160" fill="#000" opacity="0.06"/><rect x="407.3" y="500" width="1.9" height="160" fill="#fff" opacity="0.03"/><rect x="409.2" y="500" width="2.2" height="160" fill="#fff" opacity="0.05"/><rect x="411.5" y="500" width="2.5" height="160" fill="#fff" opacity="0.02"/><rect x="414.0" y="500" width="2.9" height="160" fill="#000" opacity="0.03"/><rect x="416.9" y="500" width="3.1" height="160" fill="#fff" opacity="0.01"/><rect x="420.0" y="500" width="2.9" height="160" fill="#fff" opacity="0.03"/><rect x="422.9" y="500" width="4.0" height="160" fill="#000" opacity="0.03"/><rect x="426.9" y="500" width="2.9" height="160" fill="#000" opacity="0.02"/><rect x="429.7" y="500" width="2.4" height="160" fill="#000" opacity="0.01"/><rect x="432.1" y="500" width="2.4" height="160" fill="#000" opacity="0.05"/><rect x="434.5" y="500" width="3.7" height="160" fill="#fff" opacity="0.05"/><rect x="438.2" y="500" width="2.5" height="160" fill="#000" opacity="0.05"/><rect x="440.7" y="500" width="2.4" height="160" fill="#000" opacity="0.03"/><rect x="443.1" y="500" width="2.7" height="160" fill="#fff" opacity="0.04"/><rect x="445.9" y="500" width="1.8" height="160" fill="#000" opacity="0.04"/><rect x="447.7" y="500" width="1.7" height="160" fill="#fff" opacity="0.05"/><rect x="449.4" y="500" width="2.5" height="160" fill="#fff" opacity="0.03"/><rect x="451.9" y="500" width="3.6" height="160" fill="#000" opacity="0.05"/><rect x="455.5" y="500" width="1.8" height="160" fill="#fff" opacity="0.03"/><rect x="457.4" y="500" width="3.9" height="160" fill="#000" opacity="0.03"/><rect x="461.3" y="500" width="2.5" height="160" fill="#fff" opacity="0.06"/><rect x="463.8" y="500" width="3.9" height="160" fill="#000" opacity="0.02"/><rect x="467.7" y="500" width="2.1" height="160" fill="#000" opacity="0.02"/><rect x="469.7" y="500" width="3.9" height="160" fill="#fff" opacity="0.05"/><rect x="473.6" y="500" width="1.7" height="160" fill="#000" opacity="0.05"/><rect x="475.3" y="500" width="3.5" height="160" fill="#000" opacity="0.02"/><rect x="478.8" y="500" width="3.1" height="160" fill="#000" opacity="0.03"/><rect x="481.9" y="500" width="3.1" height="160" fill="#fff" opacity="0.04"/><rect x="485.0" y="500" width="3.2" height="160" fill="#000" opacity="0.02"/><rect x="488.2" y="500" width="2.3" height="160" fill="#000" opacity="0.06"/><rect x="490.4" y="500" width="2.5" height="160" fill="#000" opacity="0.02"/><rect x="492.9" y="500" width="1.5" height="160" fill="#fff" opacity="0.03"/><rect x="494.4" y="500" width="2.2" height="160" fill="#000" opacity="0.03"/><rect x="496.6" y="500" width="2.7" height="160" fill="#000" opacity="0.02"/><rect x="499.3" y="500" width="1.6" height="160" fill="#fff" opacity="0.03"/><rect x="500.9" y="500" width="1.6" height="160" fill="#fff" opacity="0.02"/><rect x="502.5" y="500" width="1.7" height="160" fill="#fff" opacity="0.02"/><rect x="504.2" y="500" width="3.8" height="160" fill="#000" opacity="0.02"/><rect x="508.1" y="500" width="3.2" height="160" fill="#fff" opacity="0.05"/><rect x="511.3" y="500" width="3.2" height="160" fill="#fff" opacity="0.02"/><rect x="514.5" y="500" width="3.3" height="160" fill="#000" opacity="0.04"/><rect x="517.9" y="500" width="2.7" height="160" fill="#000" opacity="0.02"/><rect x="520.6" y="500" width="2.1" height="160" fill="#fff" opacity="0.02"/><rect x="522.7" y="500" width="1.8" height="160" fill="#000" opacity="0.04"/><rect x="524.4" y="500" width="3.7" height="160" fill="#000" opacity="0.03"/><rect x="528.2" y="500" width="3.9" height="160" fill="#fff" opacity="0.02"/><rect x="532.1" y="500" width="1.6" height="160" fill="#000" opacity="0.01"/><rect x="533.7" y="500" width="2.5" height="160" fill="#000" opacity="0.05"/><rect x="536.2" y="500" width="2.5" height="160" fill="#fff" opacity="0.05"/><rect x="538.7" y="500" width="3.3" height="160" fill="#000" opacity="0.06"/><rect x="542.0" y="500" width="2.3" height="160" fill="#fff" opacity="0.02"/><rect x="544.4" y="500" width="1.6" height="160" fill="#fff" opacity="0.04"/><rect x="545.9" y="500" width="3.6" height="160" fill="#fff" opacity="0.06"/><rect x="549.5" y="500" width="1.9" height="160" fill="#fff" opacity="0.01"/><rect x="551.5" y="500" width="1.7" height="160" fill="#000" opacity="0.03"/><rect x="553.2" y="500" width="2.9" height="160" fill="#fff" opacity="0.05"/><rect x="556.1" y="500" width="2.4" height="160" fill="#fff" opacity="0.05"/><rect x="558.5" y="500" width="1.7" height="160" fill="#000" opacity="0.05"/><rect x="560.2" y="500" width="2.4" height="160" fill="#000" opacity="0.06"/><rect x="562.6" y="500" width="2.3" height="160" fill="#fff" opacity="0.05"/><rect x="564.9" y="500" width="1.6" height="160" fill="#fff" opacity="0.03"/><rect x="566.5" y="500" width="1.6" height="160" fill="#000" opacity="0.01"/><rect x="568.1" y="500" width="3.5" height="160" fill="#000" opacity="0.01"/><rect x="571.6" y="500" width="3.4" height="160" fill="#fff" opacity="0.05"/><rect x="575.0" y="500" width="2.4" height="160" fill="#000" opacity="0.03"/><rect x="577.4" y="500" width="2.2" height="160" fill="#fff" opacity="0.05"/><rect x="579.5" y="500" width="3.8" height="160" fill="#000" opacity="0.02"/></g>
<linearGradient id="g_tf" x1="0" y1="0" x2="1" y2="0"><stop offset="0" stop-color="#7e7e7e"/><stop offset="1" stop-color="#959595"/></linearGradient>
<linearGradient id="g_tt" x1="0" y1="0" x2="1" y2="0"><stop offset="0" stop-color="#9c9c9c"/><stop offset="1" stop-color="#b0b0b0"/></linearGradient>
<polygon points="418.0,689.7 595.0,818.0 607.0,807.0 430.0,678.7" fill="#949494" />
<polygon points="418.0,689.7 434.0,698.5 446.0,687.5 430.0,678.7" fill="url(#g_tt)" />
<polygon points="434.0,701.0 451.0,710.4 463.0,699.4 446.0,690.0" fill="url(#g_tt)" />
<polygon points="451.0,713.0 469.0,722.9 481.0,711.9 463.0,702.0" fill="url(#g_tt)" />
<polygon points="469.0,727.0 489.0,738.0 501.0,727.0 481.0,716.0" fill="url(#g_tt)" />
<polygon points="489.0,741.6 512.4,754.5 524.4,743.5 501.0,730.6" fill="url(#g_tt)" />
<polygon points="512.4,757.6 536.8,771.0 548.8,760.0 524.4,746.6" fill="url(#g_tt)" />
<polygon points="536.8,775.6 564.4,790.8 576.4,779.8 548.8,764.6" fill="url(#g_tt)" />
<polygon points="564.4,795.7 595.0,812.5 607.0,801.5 576.4,784.7" fill="url(#g_tt)" />
<polygon points="418.0,689.7 434.0,698.5 434.0,716.6 418.0,704.5" fill="url(#g_tf)" />
<line x1="434.0" y1="698.5" x2="434.0" y2="716.6" stroke="#6e6e6e" stroke-width="1"/>
<polygon points="434.0,701.0 451.0,710.4 451.0,729.4 434.0,716.6" fill="url(#g_tf)" />
<line x1="451.0" y1="710.4" x2="451.0" y2="729.4" stroke="#6e6e6e" stroke-width="1"/>
<polygon points="451.0,713.0 469.0,722.9 469.0,743.0 451.0,729.4" fill="url(#g_tf)" />
<line x1="469.0" y1="722.9" x2="469.0" y2="743.0" stroke="#6e6e6e" stroke-width="1"/>
<polygon points="469.0,727.0 489.0,738.0 489.0,758.0 469.0,743.0" fill="url(#g_tf)" />
<line x1="489.0" y1="738.0" x2="489.0" y2="758.0" stroke="#6e6e6e" stroke-width="1"/>
<polygon points="489.0,741.6 512.4,754.5 512.4,775.7 489.0,758.0" fill="url(#g_tf)" />
<line x1="512.4" y1="754.5" x2="512.4" y2="775.7" stroke="#6e6e6e" stroke-width="1"/>
<polygon points="512.4,757.6 536.8,771.0 536.8,794.1 512.4,775.7" fill="url(#g_tf)" />
<line x1="536.8" y1="771.0" x2="536.8" y2="794.1" stroke="#6e6e6e" stroke-width="1"/>
<polygon points="536.8,775.6 564.4,790.8 564.4,814.9 536.8,794.1" fill="url(#g_tf)" />
<line x1="564.4" y1="790.8" x2="564.4" y2="814.9" stroke="#6e6e6e" stroke-width="1"/>
<polygon points="564.4,795.7 595.0,812.5 595.0,838.0 564.4,814.9" fill="url(#g_tf)" />
<line x1="595.0" y1="812.5" x2="595.0" y2="838.0" stroke="#6e6e6e" stroke-width="1"/>
<linearGradient id="g_sec" x1="0" y1="0" x2="1" y2="0"><stop offset="0" stop-color="#c8c8c8"/><stop offset="0.35" stop-color="#d4d4d4"/><stop offset="0.6" stop-color="#e4e4e4"/><stop offset="1" stop-color="#ececec"/></linearGradient>
<polygon points="575.0,578.0 589.7,579.0 589.7,618.0 644.0,610.0 657.0,796.0 638.0,814.0 625.0,646.0 575.0,628.0" fill="url(#g_sec)" />
<polygon points="574.0,577.0 589.7,579.0 589.7,628.0 574.0,628.0" fill="#e2e2e2" />
<polygon points="589.7,618.0 644.0,610.0 645.0,646.0 625.0,646.0 589.7,633.3" fill="#dedede" />
<polygon points="595.0,818.0 638.0,814.0 657.0,796.0 732.0,768.0 732.0,784.4 595.0,838.6" fill="#cacaca" />
<polygon points="657.0,796.0 732.0,768.0 732.0,784.4 650.0,812.0" fill="#d2d2d2" />
<polygon points="588.5,580.0 777.0,549.0 758.0,775.0 733.0,784.0 733.0,768.0 657.0,796.0 644.0,610.0 588.5,619.0" fill="url(#g_wood)" />
<g clip-path="url(#c_wood)"><rect x="586.0" y="540" width="1.1" height="260" fill="#c09070" opacity="0.03"/><rect x="587.1" y="540" width="2.8" height="260" fill="#c09070" opacity="0.05"/><rect x="589.8" y="540" width="3.0" height="260" fill="#c09070" opacity="0.07"/><rect x="592.8" y="540" width="1.3" height="260" fill="#2a1a10" opacity="0.05"/><rect x="594.2" y="540" width="3.0" height="260" fill="#2a1a10" opacity="0.06"/><rect x="597.2" y="540" width="2.5" height="260" fill="#c09070" opacity="0.04"/><rect x="599.7" y="540" width="2.2" height="260" fill="#2a1a10" opacity="0.07"/><rect x="601.8" y="540" width="2.3" height="260" fill="#2a1a10" opacity="0.04"/><rect x="604.1" y="540" width="1.6" height="260" fill="#2a1a10" opacity="0.02"/><rect x="605.7" y="540" width="2.2" height="260" fill="#2a1a10" opacity="0.05"/><rect x="607.9" y="540" width="3.5" height="260" fill="#2a1a10" opacity="0.07"/><rect x="611.4" y="540" width="1.7" height="260" fill="#2a1a10" opacity="0.03"/><rect x="613.0" y="540" width="2.1" height="260" fill="#c09070" opacity="0.08"/><rect x="615.1" y="540" width="1.4" height="260" fill="#c09070" opacity="0.03"/><rect x="616.5" y="540" width="2.6" height="260" fill="#2a1a10" opacity="0.06"/><rect x="619.1" y="540" width="2.9" height="260" fill="#c09070" opacity="0.04"/><rect x="622.0" y="540" width="2.4" height="260" fill="#c09070" opacity="0.04"/><rect x="624.5" y="540" width="1.5" height="260" fill="#2a1a10" opacity="0.03"/><rect x="625.9" y="540" width="1.6" height="260" fill="#2a1a10" opacity="0.04"/><rect x="627.5" y="540" width="1.8" height="260" fill="#2a1a10" opacity="0.04"/><rect x="629.4" y="540" width="2.3" height="260" fill="#2a1a10" opacity="0.03"/><rect x="631.6" y="540" width="2.6" height="260" fill="#2a1a10" opacity="0.08"/><rect x="634.3" y="540" width="1.0" height="260" fill="#2a1a10" opacity="0.07"/><rect x="635.3" y="540" width="3.1" height="260" fill="#2a1a10" opacity="0.07"/><rect x="638.4" y="540" width="3.2" height="260" fill="#2a1a10" opacity="0.03"/><rect x="641.6" y="540" width="1.5" height="260" fill="#2a1a10" opacity="0.08"/><rect x="643.0" y="540" width="3.3" height="260" fill="#2a1a10" opacity="0.04"/><rect x="646.4" y="540" width="2.1" height="260" fill="#2a1a10" opacity="0.04"/><rect x="648.5" y="540" width="1.3" height="260" fill="#c09070" opacity="0.06"/><rect x="649.7" y="540" width="1.5" height="260" fill="#2a1a10" opacity="0.04"/><rect x="651.3" y="540" width="1.1" height="260" fill="#2a1a10" opacity="0.08"/><rect x="652.4" y="540" width="2.5" height="260" fill="#2a1a10" opacity="0.06"/><rect x="654.9" y="540" width="3.0" height="260" fill="#c09070" opacity="0.07"/><rect x="657.9" y="540" width="2.7" height="260" fill="#c09070" opacity="0.03"/><rect x="660.6" y="540" width="1.2" height="260" fill="#c09070" opacity="0.02"/><rect x="661.8" y="540" width="2.4" height="260" fill="#2a1a10" opacity="0.02"/><rect x="664.2" y="540" width="3.0" height="260" fill="#2a1a10" opacity="0.06"/><rect x="667.2" y="540" width="2.6" height="260" fill="#2a1a10" opacity="0.03"/><rect x="669.8" y="540" width="2.0" height="260" fill="#c09070" opacity="0.04"/><rect x="671.8" y="540" width="2.7" height="260" fill="#2a1a10" opacity="0.05"/><rect x="674.4" y="540" width="1.8" height="260" fill="#c09070" opacity="0.05"/><rect x="676.2" y="540" width="2.0" height="260" fill="#c09070" opacity="0.02"/><rect x="678.3" y="540" width="2.6" height="260" fill="#c09070" opacity="0.04"/><rect x="680.9" y="540" width="1.5" height="260" fill="#2a1a10" opacity="0.02"/><rect x="682.4" y="540" width="2.1" height="260" fill="#c09070" opacity="0.07"/><rect x="684.4" y="540" width="2.4" height="260" fill="#2a1a10" opacity="0.04"/><rect x="686.9" y="540" width="1.3" height="260" fill="#2a1a10" opacity="0.02"/><rect x="688.2" y="540" width="2.6" height="260" fill="#2a1a10" opacity="0.07"/><rect x="690.8" y="540" width="2.4" height="260" fill="#2a1a10" opacity="0.08"/><rect x="693.2" y="540" width="1.4" height="260" fill="#2a1a10" opacity="0.04"/><rect x="694.6" y="540" width="3.3" height="260" fill="#c09070" opacity="0.03"/><rect x="697.9" y="540" width="2.9" height="260" fill="#2a1a10" opacity="0.07"/><rect x="700.8" y="540" width="1.8" height="260" fill="#2a1a10" opacity="0.07"/><rect x="702.6" y="540" width="3.4" height="260" fill="#2a1a10" opacity="0.05"/><rect x="706.0" y="540" width="2.5" height="260" fill="#2a1a10" opacity="0.06"/><rect x="708.5" y="540" width="3.3" height="260" fill="#2a1a10" opacity="0.06"/><rect x="711.8" y="540" width="2.6" height="260" fill="#c09070" opacity="0.07"/><rect x="714.4" y="540" width="2.5" height="260" fill="#c09070" opacity="0.03"/><rect x="716.9" y="540" width="1.5" height="260" fill="#c09070" opacity="0.03"/><rect x="718.4" y="540" width="3.3" height="260" fill="#c09070" opacity="0.03"/><rect x="721.7" y="540" width="1.3" height="260" fill="#2a1a10" opacity="0.03"/><rect x="723.0" y="540" width="1.1" height="260" fill="#2a1a10" opacity="0.05"/><rect x="724.1" y="540" width="2.7" height="260" fill="#c09070" opacity="0.04"/><rect x="726.8" y="540" width="2.5" height="260" fill="#c09070" opacity="0.05"/><rect x="729.3" y="540" width="2.6" height="260" fill="#2a1a10" opacity="0.04"/><rect x="731.9" y="540" width="2.1" height="260" fill="#c09070" opacity="0.06"/><rect x="734.0" y="540" width="2.3" height="260" fill="#2a1a10" opacity="0.03"/><rect x="736.2" y="540" width="2.5" height="260" fill="#2a1a10" opacity="0.05"/><rect x="738.8" y="540" width="2.1" height="260" fill="#c09070" opacity="0.06"/><rect x="740.9" y="540" width="3.1" height="260" fill="#c09070" opacity="0.07"/><rect x="744.0" y="540" width="1.3" height="260" fill="#c09070" opacity="0.03"/><rect x="745.3" y="540" width="1.9" height="260" fill="#2a1a10" opacity="0.07"/><rect x="747.2" y="540" width="1.1" height="260" fill="#c09070" opacity="0.03"/><rect x="748.3" y="540" width="2.9" height="260" fill="#2a1a10" opacity="0.05"/><rect x="751.2" y="540" width="2.9" height="260" fill="#2a1a10" opacity="0.07"/><rect x="754.1" y="540" width="1.1" height="260" fill="#2a1a10" opacity="0.02"/><rect x="755.2" y="540" width="1.5" height="260" fill="#c09070" opacity="0.08"/><rect x="756.7" y="540" width="1.7" height="260" fill="#2a1a10" opacity="0.07"/><rect x="758.4" y="540" width="2.7" height="260" fill="#2a1a10" opacity="0.06"/><rect x="761.1" y="540" width="1.2" height="260" fill="#c09070" opacity="0.04"/><rect x="762.3" y="540" width="1.4" height="260" fill="#c09070" opacity="0.07"/><rect x="763.7" y="540" width="3.3" height="260" fill="#c09070" opacity="0.05"/><rect x="766.9" y="540" width="2.3" height="260" fill="#2a1a10" opacity="0.08"/><rect x="769.2" y="540" width="2.5" height="260" fill="#2a1a10" opacity="0.06"/><rect x="771.7" y="540" width="1.8" height="260" fill="#2a1a10" opacity="0.02"/><rect x="773.5" y="540" width="2.0" height="260" fill="#c09070" opacity="0.06"/><rect x="775.5" y="540" width="2.7" height="260" fill="#2a1a10" opacity="0.07"/><rect x="778.2" y="540" width="3.0" height="260" fill="#2a1a10" opacity="0.04"/></g>
<polygon points="385.0,518.0 549.0,506.0 778.0,549.0 777.0,552.0 588.0,582.0 586.0,579.0" fill="#1e1613" />
<linearGradient id="g_edge" x1="0" y1="0" x2="0" y2="1"><stop offset="0" stop-color="#1e1613"/><stop offset="1" stop-color="#4a4a4a" stop-opacity="0"/></linearGradient>
<polygon points="385.0,519.0 586.0,579.0 586.0,587.0 388.0,527.0" fill="url(#g_edge)" />
<g><line x1="385" y1="516.5" x2="431" y2="514.5" stroke="#2a33a6" stroke-width="1.5"/><line x1="385" y1="512" x2="385" y2="524" stroke="#2a33a6" stroke-width="1.5"/><line x1="423" y1="510" x2="423" y2="520" stroke="#2a33a6" stroke-width="1.5"/><line x1="431" y1="509" x2="431" y2="518" stroke="#2a33a6" stroke-width="1.5"/><text transform="translate(413,510) rotate(176) scale(-1,1)" font-size="9" font-weight="bold" text-anchor="middle" font-family="Liberation Sans" fill="#2a33a6" stroke="#2a33a6" stroke-width="1.6" letter-spacing="-0.5">2001800</text><line x1="372" y1="549" x2="391" y2="696" stroke="#2a33a6" stroke-width="1.5"/><line x1="372" y1="549" x2="388" y2="548" stroke="#2a33a6" stroke-width="1.5"/><text transform="translate(380,624) rotate(83) scale(-1,1)" font-size="9.5" font-weight="bold" text-anchor="middle" font-family="Liberation Sans" fill="#2a33a6" stroke="#2a33a6" stroke-width="1.6" letter-spacing="-0.5">4000</text><line x1="427" y1="571" x2="437" y2="682" stroke="#2a33a6" stroke-width="1.5"/><line x1="413.5" y1="662" x2="434.7" y2="658" stroke="#2a33a6" stroke-width="1.5"/><line x1="413.5" y1="662" x2="414" y2="686" stroke="#2a33a6" stroke-width="1.5"/><line x1="434.7" y1="658" x2="436" y2="684" stroke="#2a33a6" stroke-width="1.5"/><text transform="translate(424,660) rotate(-10) scale(-1,1)" font-size="8" font-weight="bold" text-anchor="middle" font-family="Liberation Sans" fill="#2a33a6" stroke="#2a33a6" stroke-width="1.6" letter-spacing="-0.5">700</text><line x1="388" y1="696" x2="413.5" y2="689.6" stroke="#2a33a6" stroke-width="1.5"/><text transform="translate(391,697) rotate(83) scale(-1,1)" font-size="9" font-weight="bold" text-anchor="middle" font-family="Liberation Sans" fill="#2a33a6" stroke="#2a33a6" stroke-width="1.6" letter-spacing="-0.5">500</text><line x1="396" y1="701" x2="559" y2="833.5" stroke="#2a33a6" stroke-width="1.5"/><text transform="translate(461,751) rotate(38) scale(-1,1)" font-size="9.5" font-weight="bold" text-anchor="middle" font-family="Liberation Sans" fill="#2a33a6" stroke="#2a33a6" stroke-width="1.6" letter-spacing="-0.5">6000</text><text transform="translate(553,845) rotate(90) scale(-1,1)" font-size="10" font-weight="bold" text-anchor="middle" font-family="Liberation Sans" fill="#2a33a6" stroke="#2a33a6" stroke-width="1.6" letter-spacing="-0.5">800</text><line x1="552" y1="663" x2="557" y2="834" stroke="#2a33a6" stroke-width="1.5"/><text transform="translate(551,753) rotate(90) scale(-1,1)" font-size="10.5" font-weight="bold" text-anchor="middle" font-family="Liberation Sans" fill="#2a33a6" stroke="#2a33a6" stroke-width="1.6" letter-spacing="-0.5">6000</text><line x1="552" y1="663" x2="623" y2="646" stroke="#2a33a6" stroke-width="1.5"/><line x1="632" y1="644.4" x2="771" y2="613" stroke="#2a33a6" stroke-width="1.5"/><line x1="627.5" y1="598" x2="627.5" y2="639" stroke="#2a33a6" stroke-width="1.5"/><line x1="771" y1="613" x2="757.5" y2="771" stroke="#2a33a6" stroke-width="1.5"/><text transform="translate(758,697) rotate(90) scale(-1,1)" font-size="10" font-weight="bold" text-anchor="middle" font-family="Liberation Sans" fill="#2a33a6" stroke="#2a33a6" stroke-width="1.6" letter-spacing="-0.5">4800</text><line x1="658.4" y1="762" x2="734.9" y2="736" stroke="#2a33a6" stroke-width="1.5"/><line x1="658.4" y1="742" x2="658.4" y2="790" stroke="#2a33a6" stroke-width="1.5"/><line x1="734.9" y1="732" x2="734" y2="764" stroke="#2a33a6" stroke-width="1.5"/><text transform="translate(698,748) rotate(-18) scale(-1,1)" font-size="10" font-weight="bold" text-anchor="middle" font-family="Liberation Sans" fill="#2a33a6" stroke="#2a33a6" stroke-width="1.6" letter-spacing="-0.5">4800</text><line x1="736" y1="767" x2="758" y2="757" stroke="#2a33a6" stroke-width="1.5"/><text transform="translate(752,767) rotate(90) scale(-1,1)" font-size="9.5" font-weight="bold" text-anchor="middle" font-family="Liberation Sans" fill="#2a33a6" stroke="#2a33a6" stroke-width="1.6" letter-spacing="-0.5">800</text><line x1="736" y1="783" x2="758" y2="774.7" stroke="#2a33a6" stroke-width="1.5"/><line x1="594.5" y1="874" x2="730.6" y2="818" stroke="#2a33a6" stroke-width="1.5"/><line x1="594.5" y1="840" x2="594.5" y2="876" stroke="#2a33a6" stroke-width="1.5"/><line x1="730.6" y1="787" x2="730.6" y2="818" stroke="#2a33a6" stroke-width="1.5"/><text transform="translate(666,843) rotate(-22) scale(-1,1)" font-size="9.5" font-weight="bold" text-anchor="middle" font-family="Liberation Sans" fill="#2a33a6" stroke="#2a33a6" stroke-width="1.6" letter-spacing="-0.5">4800</text><line x1="557" y1="846" x2="594.5" y2="874" stroke="#2a33a6" stroke-width="1.5"/><line x1="597" y1="790" x2="625" y2="783" stroke="#2a33a6" stroke-width="1.5"/><line x1="597" y1="790" x2="597" y2="820" stroke="#2a33a6" stroke-width="1.5"/><line x1="625" y1="782" x2="625" y2="815" stroke="#2a33a6" stroke-width="1.5"/><text transform="translate(607,784) rotate(-12) scale(-1,1)" font-size="8" font-weight="bold" text-anchor="middle" font-family="Liberation Sans" fill="#2a33a6" stroke="#2a33a6" stroke-width="1.6" letter-spacing="-0.5">700</text></g><!-- 3D END -->
<!-- ground -->
<rect x="177" y="470" width="865" height="1.8" fill="#2c2a8a"/>
<rect x="482.5" y="469.8" width="258" height="1.5" fill="#111"/>
<rect x="177" y="471.5" width="865" height="11" fill="#7e4242"/>
<rect x="177" y="482.5" width="865" height="1.5" fill="#c8c4dc"/>
<!-- load arrows -->
<g stroke="#1a6288" stroke-width="1.4"><line x1="476.5" y1="80" x2="476.5" y2="114" /><line x1="488.5" y1="80" x2="488.5" y2="114" /><line x1="500.5" y1="80" x2="500.5" y2="114" /><line x1="512.4" y1="80" x2="512.4" y2="114" /><line x1="524.4" y1="80" x2="524.4" y2="114" /><line x1="536.4" y1="80" x2="536.4" y2="114" /><line x1="548.4" y1="80" x2="548.4" y2="114" /><line x1="560.3" y1="80" x2="560.3" y2="114" /><line x1="572.3" y1="80" x2="572.3" y2="114" /><line x1="584.3" y1="80" x2="584.3" y2="114" /><line x1="596.3" y1="80" x2="596.3" y2="114" /><line x1="608.2" y1="80" x2="608.2" y2="114" /><line x1="620.2" y1="80" x2="620.2" y2="114" /><line x1="632.2" y1="80" x2="632.2" y2="114" /><line x1="644.2" y1="80" x2="644.2" y2="114" /><line x1="656.2" y1="80" x2="656.2" y2="114" /><line x1="668.1" y1="80" x2="668.1" y2="114" /><line x1="680.1" y1="80" x2="680.1" y2="114" /><line x1="692.1" y1="80" x2="692.1" y2="114" /><line x1="704.1" y1="80" x2="704.1" y2="114" /><line x1="716.0" y1="80" x2="716.0" y2="114" /><line x1="728.0" y1="80" x2="728.0" y2="114" /><line x1="740.0" y1="80" x2="740.0" y2="114" /><line x1="752.0" y1="80" x2="752.0" y2="114" /><line x1="763.9" y1="80" x2="763.9" y2="114" /><line x1="775.9" y1="80" x2="775.9" y2="114" /><line x1="787.9" y1="80" x2="787.9" y2="114" /><line x1="799.9" y1="80" x2="799.9" y2="114" /><line x1="811.9" y1="80" x2="811.9" y2="114" /><line x1="823.8" y1="80" x2="823.8" y2="114" /><line x1="835.8" y1="80" x2="835.8" y2="114" /><line x1="847.8" y1="80" x2="847.8" y2="114" /><line x1="859.8" y1="80" x2="859.8" y2="114" /><line x1="871.7" y1="80" x2="871.7" y2="114" /><line x1="883.7" y1="80" x2="883.7" y2="114" /><line x1="895.7" y1="80" x2="895.7" y2="114" /><line x1="907.7" y1="80" x2="907.7" y2="114" /><line x1="919.6" y1="80" x2="919.6" y2="114" /><line x1="931.6" y1="80" x2="931.6" y2="114" /><line x1="943.6" y1="80" x2="943.6" y2="114" /><line x1="955.6" y1="80" x2="955.6" y2="114" /><line x1="967.6" y1="80" x2="967.6" y2="114" /><line x1="979.5" y1="80" x2="979.5" y2="114" /><line x1="991.5" y1="80" x2="991.5" y2="114" /><line x1="1003.5" y1="80" x2="1003.5" y2="114" /><line x1="1015.5" y1="80" x2="1015.5" y2="114" /><line x1="1027.4" y1="80" x2="1027.4" y2="114" /><line x1="1039.4" y1="80" x2="1039.4" y2="114" /></g>
<g stroke="#1a6288" stroke-width="1" fill="none"><path d="M473.5 111 L476.5 116 L479.5 111" /><path d="M485.5 111 L488.5 116 L491.5 111" /><path d="M497.5 111 L500.5 116 L503.5 111" /><path d="M509.4 111 L512.4 116 L515.4 111" /><path d="M521.4 111 L524.4 116 L527.4 111" /><path d="M533.4 111 L536.4 116 L539.4 111" /><path d="M545.4 111 L548.4 116 L551.4 111" /><path d="M557.3 111 L560.3 116 L563.3 111" /><path d="M569.3 111 L572.3 116 L575.3 111" /><path d="M581.3 111 L584.3 116 L587.3 111" /><path d="M593.3 111 L596.3 116 L599.3 111" /><path d="M605.2 111 L608.2 116 L611.2 111" /><path d="M617.2 111 L620.2 116 L623.2 111" /><path d="M629.2 111 L632.2 116 L635.2 111" /><path d="M641.2 111 L644.2 116 L647.2 111" /><path d="M653.2 111 L656.2 116 L659.2 111" /><path d="M665.1 111 L668.1 116 L671.1 111" /><path d="M677.1 111 L680.1 116 L683.1 111" /><path d="M689.1 111 L692.1 116 L695.1 111" /><path d="M701.1 111 L704.1 116 L707.1 111" /><path d="M713.0 111 L716.0 116 L719.0 111" /><path d="M725.0 111 L728.0 116 L731.0 111" /><path d="M737.0 111 L740.0 116 L743.0 111" /><path d="M749.0 111 L752.0 116 L755.0 111" /><path d="M760.9 111 L763.9 116 L766.9 111" /><path d="M772.9 111 L775.9 116 L778.9 111" /><path d="M784.9 111 L787.9 116 L790.9 111" /><path d="M796.9 111 L799.9 116 L802.9 111" /><path d="M808.9 111 L811.9 116 L814.9 111" /><path d="M820.8 111 L823.8 116 L826.8 111" /><path d="M832.8 111 L835.8 116 L838.8 111" /><path d="M844.8 111 L847.8 116 L850.8 111" /><path d="M856.8 111 L859.8 116 L862.8 111" /><path d="M868.7 111 L871.7 116 L874.7 111" /><path d="M880.7 111 L883.7 116 L886.7 111" /><path d="M892.7 111 L895.7 116 L898.7 111" /><path d="M904.7 111 L907.7 116 L910.7 111" /><path d="M916.6 111 L919.6 116 L922.6 111" /><path d="M928.6 111 L931.6 116 L934.6 111" /><path d="M940.6 111 L943.6 116 L946.6 111" /><path d="M952.6 111 L955.6 116 L958.6 111" /><path d="M964.6 111 L967.6 116 L970.6 111" /><path d="M976.5 111 L979.5 116 L982.5 111" /><path d="M988.5 111 L991.5 116 L994.5 111" /><path d="M1000.5 111 L1003.5 116 L1006.5 111" /><path d="M1012.5 111 L1015.5 116 L1018.5 111" /><path d="M1024.4 111 L1027.4 116 L1030.4 111" /><path d="M1036.4 111 L1039.4 116 L1042.4 111" /></g>
<g fill="#1a6288"><rect x="475.2" y="112" width="2.6" height="3" /><rect x="487.2" y="112" width="2.6" height="3" /><rect x="499.2" y="112" width="2.6" height="3" /><rect x="511.1" y="112" width="2.6" height="3" /><rect x="523.1" y="112" width="2.6" height="3" /><rect x="535.1" y="112" width="2.6" height="3" /><rect x="547.1" y="112" width="2.6" height="3" /><rect x="559.0" y="112" width="2.6" height="3" /><rect x="571.0" y="112" width="2.6" height="3" /><rect x="583.0" y="112" width="2.6" height="3" /><rect x="595.0" y="112" width="2.6" height="3" /><rect x="606.9" y="112" width="2.6" height="3" /><rect x="618.9" y="112" width="2.6" height="3" /><rect x="630.9" y="112" width="2.6" height="3" /><rect x="642.9" y="112" width="2.6" height="3" /><rect x="654.9" y="112" width="2.6" height="3" /><rect x="666.8" y="112" width="2.6" height="3" /><rect x="678.8" y="112" width="2.6" height="3" /><rect x="690.8" y="112" width="2.6" height="3" /><rect x="702.8" y="112" width="2.6" height="3" /><rect x="714.7" y="112" width="2.6" height="3" /><rect x="726.7" y="112" width="2.6" height="3" /><rect x="738.7" y="112" width="2.6" height="3" /><rect x="750.7" y="112" width="2.6" height="3" /><rect x="762.6" y="112" width="2.6" height="3" /><rect x="774.6" y="112" width="2.6" height="3" /><rect x="786.6" y="112" width="2.6" height="3" /><rect x="798.6" y="112" width="2.6" height="3" /><rect x="810.6" y="112" width="2.6" height="3" /><rect x="822.5" y="112" width="2.6" height="3" /><rect x="834.5" y="112" width="2.6" height="3" /><rect x="846.5" y="112" width="2.6" height="3" /><rect x="858.5" y="112" width="2.6" height="3" /><rect x="870.4" y="112" width="2.6" height="3" /><rect x="882.4" y="112" width="2.6" height="3" /><rect x="894.4" y="112" width="2.6" height="3" /><rect x="906.4" y="112" width="2.6" height="3" /><rect x="918.3" y="112" width="2.6" height="3" /><rect x="930.3" y="112" width="2.6" height="3" /><rect x="942.3" y="112" width="2.6" height="3" /><rect x="954.3" y="112" width="2.6" height="3" /><rect x="966.3" y="112" width="2.6" height="3" /><rect x="978.2" y="112" width="2.6" height="3" /><rect x="990.2" y="112" width="2.6" height="3" /><rect x="1002.2" y="112" width="2.6" height="3" /><rect x="1014.2" y="112" width="2.6" height="3" /><rect x="1026.1" y="112" width="2.6" height="3" /><rect x="1038.1" y="112" width="2.6" height="3" /></g>
</svg>
</body></html>
